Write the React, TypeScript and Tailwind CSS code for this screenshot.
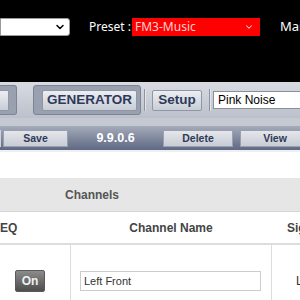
import { ChevronDown } from "lucide-react";

const tbBtn =
  "shrink-0 flex items-center justify-center h-[21px] rounded-[2px] border border-[#8f96a6] bg-gradient-to-b from-[#eceef2] to-[#c9cdd6] text-[#2e3a5a] font-bold text-[13.5px] leading-none whitespace-nowrap";

const subBtn =
  "shrink-0 flex items-center justify-center h-[17px] border border-[#9aa0ae] bg-gradient-to-b from-[#e4e6eb] to-[#c8ccd5] text-[#2f3a56] font-bold text-[10.5px] leading-none";

function Sep() {
  return (
    <div className="flex h-[22px] shrink-0">
      <div className="w-px bg-[#8d94a4]" />
      <div className="w-px bg-[#e2e4e9]" />
    </div>
  );
}

export default function App() {
  return (
    <div className="w-[300px] h-[300px] overflow-hidden bg-white flex flex-col font-['Liberation_Sans',Arial,sans-serif]">
      {/* top bar */}
      <div className="h-[82px] shrink-0 bg-black pt-[18px]">
        <div className="flex items-center h-[18px] whitespace-nowrap">
          <div className="shrink-0 w-[70px] h-[18px] bg-white border border-[#9a9a9a] rounded-r-[3px] flex items-center justify-end pr-[3px]">
            <ChevronDown size={12} strokeWidth={3} className="text-black" />
          </div>
          <span className="shrink-0 ml-[19px] w-[43px] text-white text-[12px] font-['Noto_Sans',sans-serif]">
            Preset :
          </span>
          <div className="shrink-0 w-[128px] h-[18px] bg-[#ff0000] flex items-center justify-between pl-[3px] pr-[6px]">
            <span className="text-[#fcd0d0] text-[12px] font-['Noto_Sans',sans-serif]">
              FM3-Music
            </span>
            <ChevronDown size={10} strokeWidth={2.5} className="text-[#fcd0d0]" />
          </div>
          <span className="shrink-0 ml-[20px] text-white text-[13px] font-['Noto_Sans',sans-serif]">
            Main
          </span>
        </div>
      </div>

      {/* main toolbar */}
      <div className="h-[36px] shrink-0 bg-gradient-to-b from-[#d8dbe2] to-[#bcc0ca] flex items-center">
        <div className="shrink-0 w-[17px] h-[30px] bg-[#99a0b0] border border-l-0 border-[#7c8495] rounded-r-[3px] flex items-center">
          <div className={`${tbBtn} w-[9px] border-l-0 rounded-l-none`} />
        </div>
        <div className="shrink-0 ml-[16px] w-[108px] h-[30px] bg-[#99a0b0] border border-[#7c8495] rounded-[3px] flex items-center pl-[8px]">
          <div className={`${tbBtn} w-[95px]`}>GENERATOR</div>
        </div>
        <div className="shrink-0 ml-[3px]">
          <Sep />
        </div>
        <div className={`${tbBtn} ml-[6px] w-[50px]`}>Setup</div>
        <div className="shrink-0 ml-[7px]">
          <Sep />
        </div>
        <div className="shrink-0 ml-[2px] w-[100px] h-[18px] bg-white border border-[#8a8f9c] flex items-center pl-[4px] text-[12px] text-black whitespace-nowrap">
          Pink Noise
        </div>
      </div>

      {/* sub toolbar */}
      <div className="h-[34px] shrink-0 flex flex-col">
        <div className="h-[8px] bg-[#c5c9d2]" />
        <div className="h-[24px] bg-gradient-to-b from-[#a4abba] to-[#5f6983] flex items-center">
          <div className="shrink-0 w-px h-[17px] bg-[#d0d3da]" />
          <div className={`${subBtn} ml-[2px] w-[65px]`}>Save</div>
          <div className="shrink-0 w-[95px] text-center text-white font-bold text-[12.5px]">
            9.9.0.6
          </div>
          <div className={`${subBtn} w-[70px]`}>Delete</div>
          <div className={`${subBtn} ml-[7px] w-[70px]`}>View</div>
        </div>
        <div className="h-[2px] bg-[#eef0f3]" />
      </div>

      <div className="h-[26px] shrink-0" />

      {/* channels section */}
      <div className="h-[34px] shrink-0 bg-[#e6e6e6] border-b border-[#d6d6d6] flex items-center">
        <div className="w-[184px] text-center text-[#555] font-bold text-[12px]">
          Channels
        </div>
      </div>

      <div className="h-[33px] shrink-0 border-b-2 border-[#dddddd] flex items-center text-[12px] font-bold text-[#444] whitespace-nowrap">
        <div className="shrink-0 w-[70px]">EQ</div>
        <div className="shrink-0 w-[202px] text-center">Channel Name</div>
        <div className="shrink-0 pl-[15px]">Signal</div>
      </div>

      <div className="h-[72px] shrink-0 flex">
        <div className="shrink-0 w-[71px] border-r border-[#dddddd] flex items-center pl-[15px]">
          <div className="w-[30px] h-[22px] rounded-[2px] border border-[#5a5a5a] bg-gradient-to-b from-[#8c8c8c] to-[#4e4e4e] flex items-center justify-center text-[#f0f0f0] font-bold text-[12px]">
            On
          </div>
        </div>
        <div className="shrink-0 w-[201px] border-r border-[#dddddd] flex items-center pl-[9px]">
          <div className="w-[181px] h-[20px] border border-[#cccccc] flex items-center pl-[3px] text-[11px] text-[#333]">
            Left Front
          </div>
        </div>
        <div className="shrink-0 flex items-center pl-[24px] text-[12px] text-[#333] whitespace-nowrap">
          Left
        </div>
      </div>
    </div>
  );
}
